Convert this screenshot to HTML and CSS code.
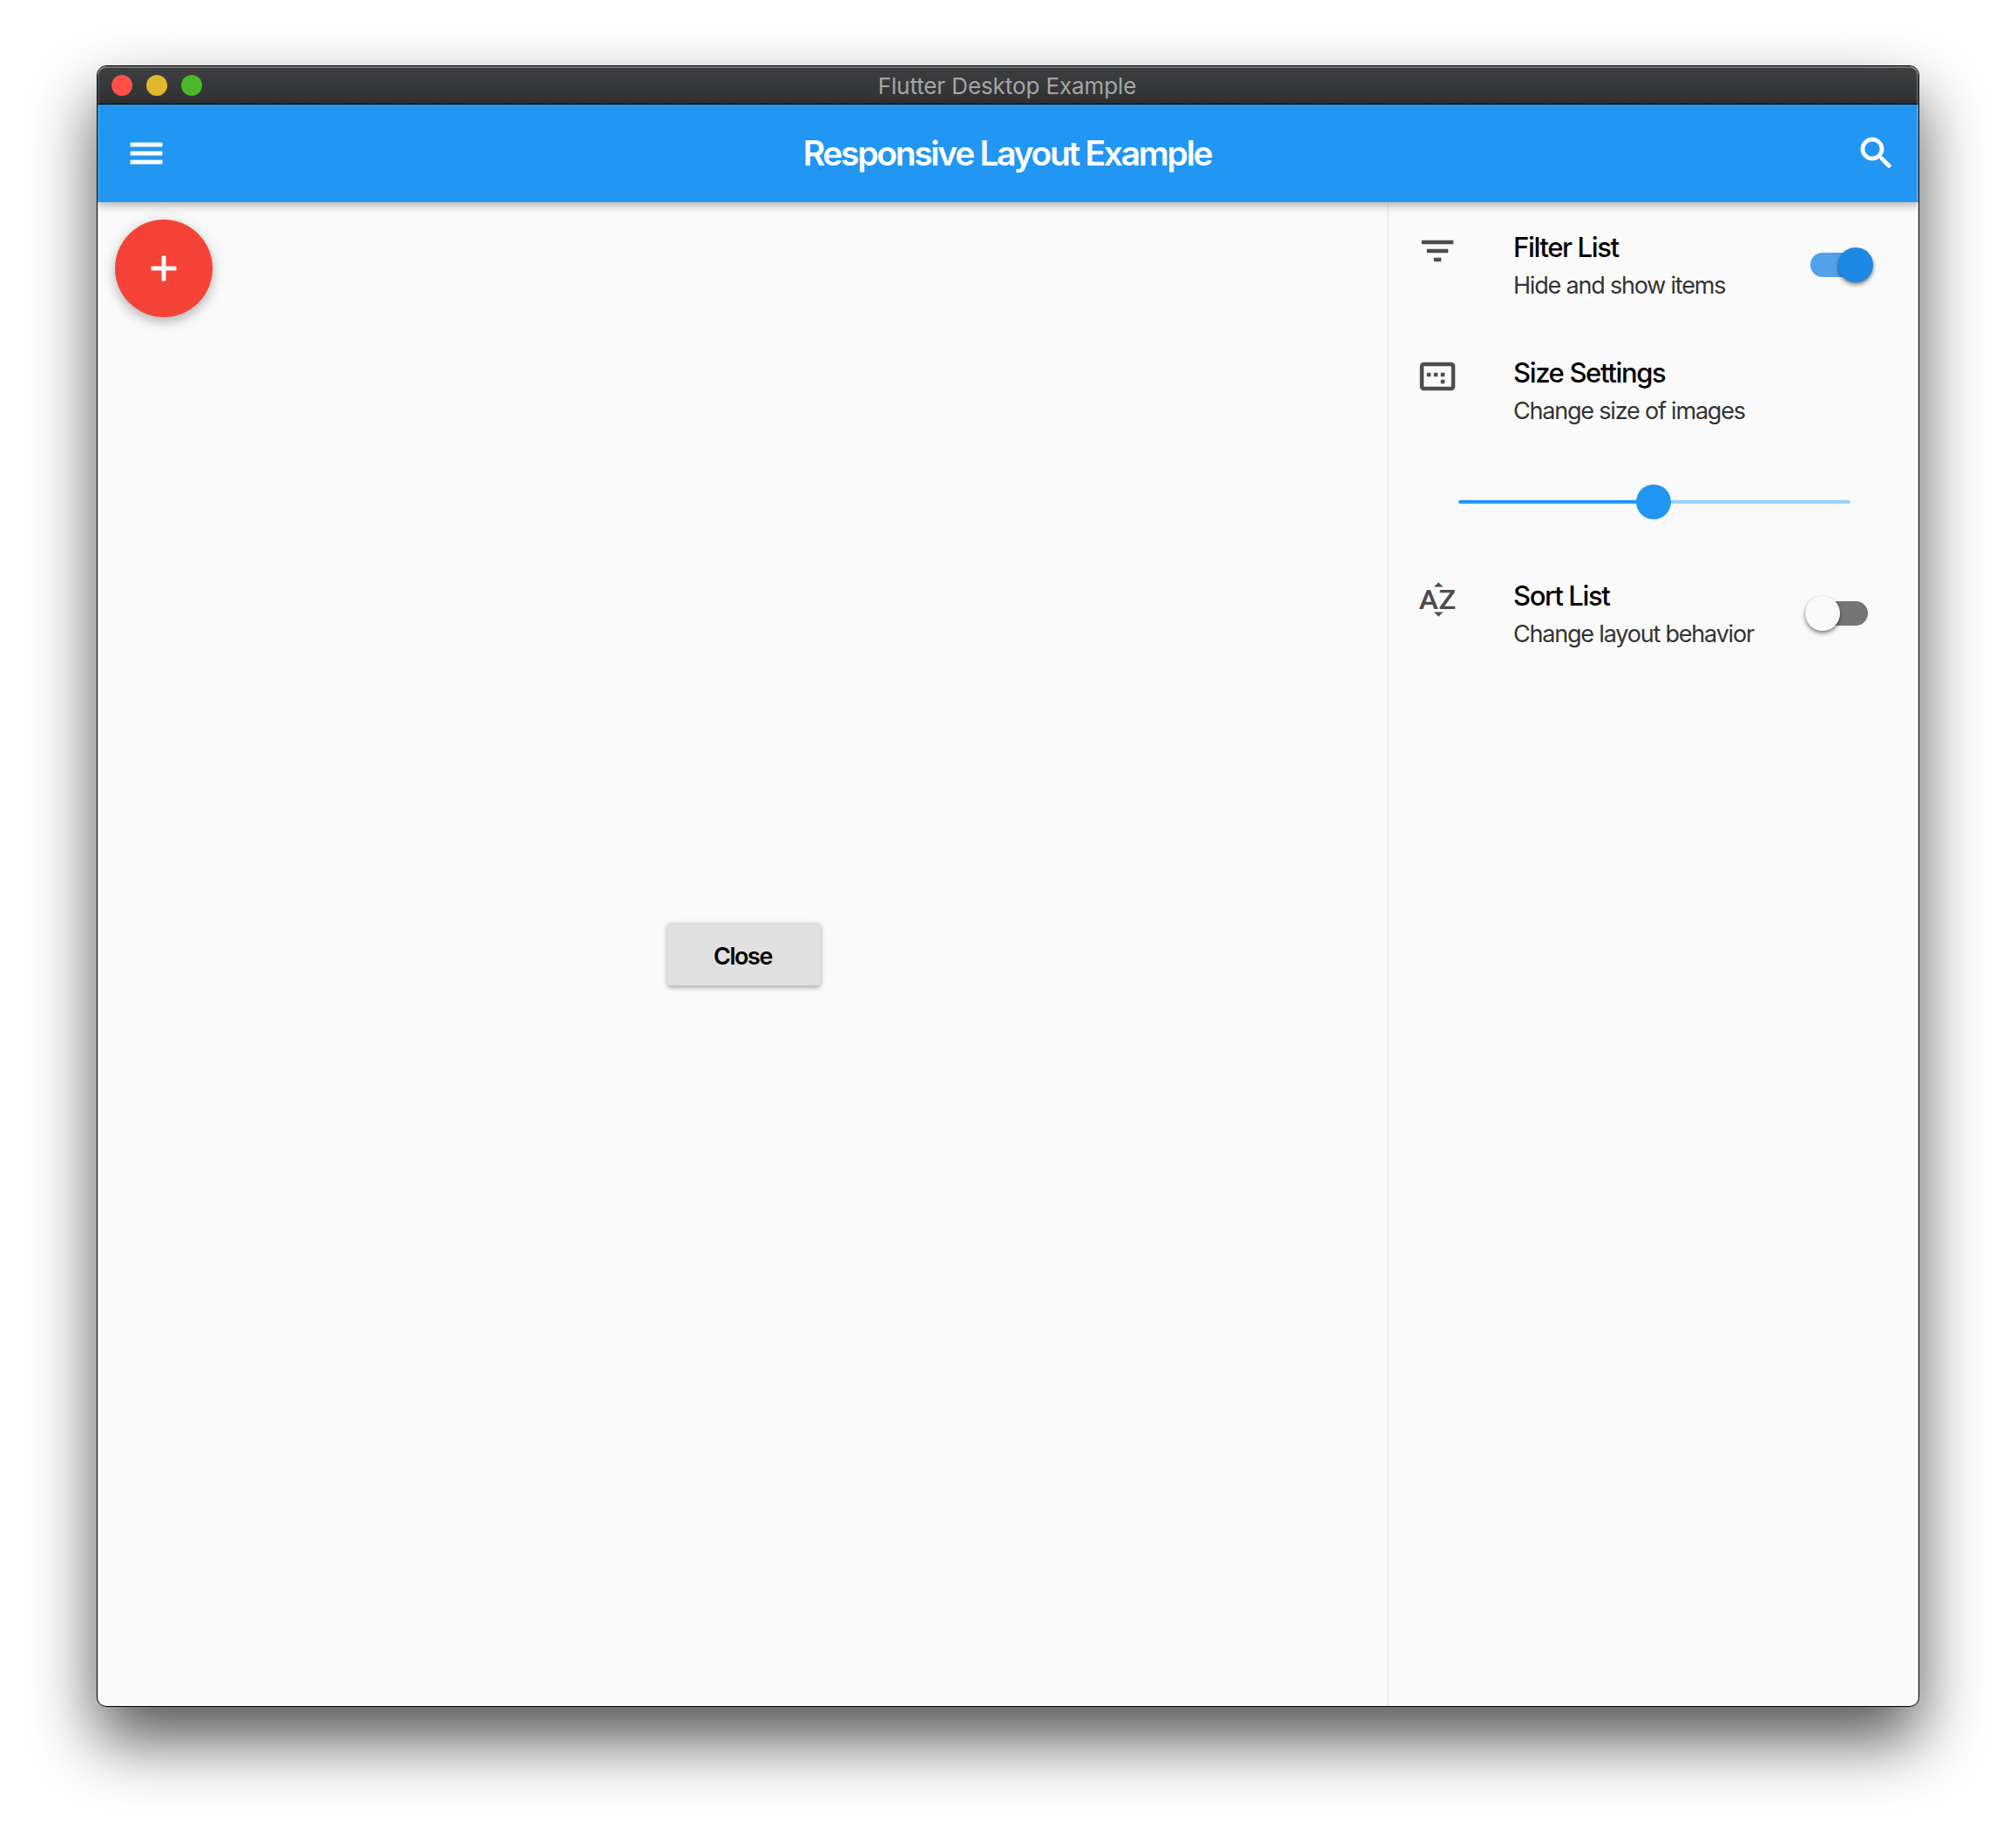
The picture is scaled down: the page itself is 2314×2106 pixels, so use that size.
FILE: index.html
```html
<!DOCTYPE html>
<html lang="en">
<head>
<meta charset="utf-8">
<title>Flutter Desktop Example</title>
<link rel="stylesheet" href="styles.css">
</head>
<body>
<div class="window">
  <header class="titlebar">
    <div class="lights"><i class="light close"></i><i class="light minimize"></i><i class="light expand"></i></div>
    <span class="window-title">Flutter Desktop Example</span>
  </header>
  <nav class="appbar">
    <svg class="icon" viewBox="0 0 24 24"><path d="M3 18h18v-2H3v2zm0-5h18v-2H3v2zm0-7v2h18V6H3z"/></svg>
    <h1 class="app-title">Responsive Layout Example</h1>
    <svg class="icon" viewBox="0 0 24 24"><path d="M15.5 14h-.79l-.28-.27C15.41 12.59 16 11.11 16 9.5 16 5.91 13.09 3 9.5 3S3 5.91 3 9.5 5.91 16 9.5 16c1.61 0 3.09-.59 4.23-1.57l.27.28v.79l5 4.99L20.49 19l-4.99-5zm-6 0C7.01 14 5 11.99 5 9.5S7.01 5 9.5 5 14 7.01 14 9.5 11.99 14 9.5 14z"/></svg>
  </nav>
  <div class="content">
    <main class="stage">
      <button class="raised">Close</button>
      <button class="fab" aria-label="Add"><svg class="icon" viewBox="0 0 24 24"><path d="M19 13h-6v6h-2v-6H5v-2h6V5h2v6h6v2z"/></svg></button>
    </main>
    <aside class="panel">
      <div class="tile">
        <svg class="icon" viewBox="0 0 24 24"><path d="M10 18h4v-2h-4v2zM3 6v2h18V6H3zm3 7h12v-2H6v2z"/></svg>
        <div class="labels"><span class="label">Filter List</span><span class="hint">Hide and show items</span></div>
        <div class="switch on"><i class="thumb"></i></div>
      </div>
      <div class="tile">
        <svg class="icon" viewBox="0 0 24 24"><path d="M16 10h-2v2h2v-2zm0 4h-2v2h2v-2zm-8-4H6v2h2v-2zm4 0h-2v2h2v-2zm8-6H4c-1.1 0-2 .9-2 2v12c0 1.1.9 2 2 2h16c1.1 0 2-.9 2-2V6c0-1.1-.9-2-2-2zm0 14H4V6h16v12z"/></svg>
        <div class="labels"><span class="label">Size Settings</span><span class="hint">Change size of images</span></div>
      </div>
      <div class="slider"><i class="knob"></i></div>
      <div class="tile">
        <svg class="icon sort" viewBox="0 0 24 24"><path d="M14.94 4.66h-4.72l2.36-2.36zM10.25 19.37h4.66l-2.33 2.33z"/><text x="1.4" y="17.7" textLength="11" lengthAdjust="spacingAndGlyphs">A</text><text x="12.7" y="17.7" textLength="9.8" lengthAdjust="spacingAndGlyphs">Z</text></svg>
        <div class="labels"><span class="label">Sort List</span><span class="hint">Change layout behavior</span></div>
        <div class="switch"><i class="thumb"></i></div>
      </div>
    </aside>
  </div>
</div>
</body>
</html>
```
FILE: styles.css
```css
* { box-sizing: border-box; }

body {
  margin: 0;
  padding: 75px 111px;
  height: 2106px;
  overflow: hidden;
  background: #fff;
  font-family: Inter, "Liberation Sans", sans-serif;
}

.window {
  position: relative;
  width: 2092px;
  height: 1884px;
  border: 1px solid #000;
  border-radius: 11px;
  overflow: hidden;
  display: flex;
  flex-direction: column;
  background: #fafafa;
  box-shadow: 0 38px 76px rgba(0, 0, 0, .67);
}

/* light bevel along the top and side edges of the bars */
.window::after {
  content: "";
  position: absolute;
  z-index: 2;
  inset: 0 0 auto;
  height: 156px;
  border-radius: 10px 10px 0 0;
  pointer-events: none;
  box-shadow: inset -2px 0 rgba(255, 255, 255, .2), inset 2px 0 rgba(255, 255, 255, .1), inset 0 2px rgba(255, 255, 255, .28);
}

/* Title bar */
.titlebar {
  height: 44px;
  flex: none;
  display: grid;
  grid-template-columns: 1fr auto 1fr;
  align-items: center;
  padding: 1px 16px 0;
  background: linear-gradient(#3e3f41, #303133);
  border-bottom: 1px solid #000;
}
.lights { display: flex; gap: 16px; }
.light { width: 24px; height: 24px; border-radius: 50%; }
.close { background: #ff5049; }
.minimize { background: #e1b82a; }
.expand { background: #4bb929; }
.window-title { padding: 2px 2px 0 0; color: #a5a5a6; font-size: 26px; line-height: 32px; letter-spacing: -.1px; }

.icon {
  width: 48px;
  height: 48px;
  fill: currentColor;
  stroke: currentColor;
  stroke-width: .45;
  flex: none;
  display: block;
}

/* App bar */
.appbar {
  position: relative;
  z-index: 1;
  height: 112px;
  flex: none;
  display: flex;
  align-items: center;
  padding: 0 24px 1px 32px;
  background: #2196f3;
  color: #fff;
  box-shadow: 0 4px 8px rgba(0, 0, 0, .18), 0 2px 14px rgba(0, 0, 0, .14);
}
.app-title {
  flex: 1;
  margin: 0;
  padding: 1px 10px 0 0;
  text-align: center;
  font-size: 39px;
  font-weight: 600;
  line-height: 48px;
  letter-spacing: -2.3px;
}

.content { flex: 1; display: flex; min-height: 0; }

/* Main stage */
.stage {
  position: relative;
  flex: 1;
  display: flex;
  align-items: center;
  justify-content: center;
  padding-left: 4px;
}
button { border: 0; padding: 0; font-family: inherit; }
.raised {
  width: 176px;
  height: 72px;
  padding: 6px 3px 0 0;
  border-radius: 4px;
  background: #e0e0e0;
  color: #000;
  font-size: 27px;
  font-weight: 600;
  line-height: 34px;
  letter-spacing: -1.4px;
  box-shadow: 0 3px 5px rgba(0, 0, 0, .25), 0 1px 8px rgba(0, 0, 0, .08);
}
.fab {
  position: absolute;
  left: 20px;
  top: 20px;
  width: 112px;
  height: 112px;
  border-radius: 50%;
  background: #f44336;
  color: #fff;
  display: flex;
  align-items: center;
  justify-content: center;
  box-shadow: 0 6px 12px rgba(0, 0, 0, .2), 0 2px 20px rgba(0, 0, 0, .1);
}

/* Settings panel */
.panel { width: 610px; border-left: 2px solid #ededed; padding-top: 16px; }
.tile { display: flex; height: 144px; padding: 15px 58px 0 32px; }
.tile .icon { margin-top: 1px; color: #4d4d4d; stroke-width: .25; }
.labels {
  flex: 1;
  margin-left: 63px;
  padding-top: 1px;
  display: flex;
  flex-direction: column;
  white-space: nowrap;
}
.label { font-size: 31px; font-weight: 450; line-height: 40px; letter-spacing: -1.35px; color: #000; }
.hint { margin-top: 4px; font-size: 27px; line-height: 40px; letter-spacing: -1.2px; color: #333; }
.sort text { font: 500 16.1px Roboto, sans-serif; stroke-width: .1; }

.switch {
  position: relative;
  flex: none;
  width: 66px;
  height: 28px;
  margin-top: 27px;
  border-radius: 14px;
  background: #757575;
}
.thumb {
  position: absolute;
  left: -6px;
  top: -6px;
  width: 40px;
  height: 40px;
  border-radius: 50%;
  background: #fafafa;
  box-shadow: 0 3px 5px rgba(0, 0, 0, .4), 0 1px 3px rgba(0, 0, 0, .2);
}
.on { background: #54a1eb; }
.on .thumb { left: 32px; background: #1e88e5; }

.slider {
  display: flex;
  align-items: center;
  justify-content: center;
  width: 450px;
  height: 4px;
  margin: 38px 0 70px 80px;
  padding-right: 2px;
  border-radius: 2px;
  background: linear-gradient(90deg, #2196f3 50%, #9ed0fa 50%);
}
.knob { flex: none; width: 40px; height: 40px; border-radius: 50%; background: #2196f3; }
```
